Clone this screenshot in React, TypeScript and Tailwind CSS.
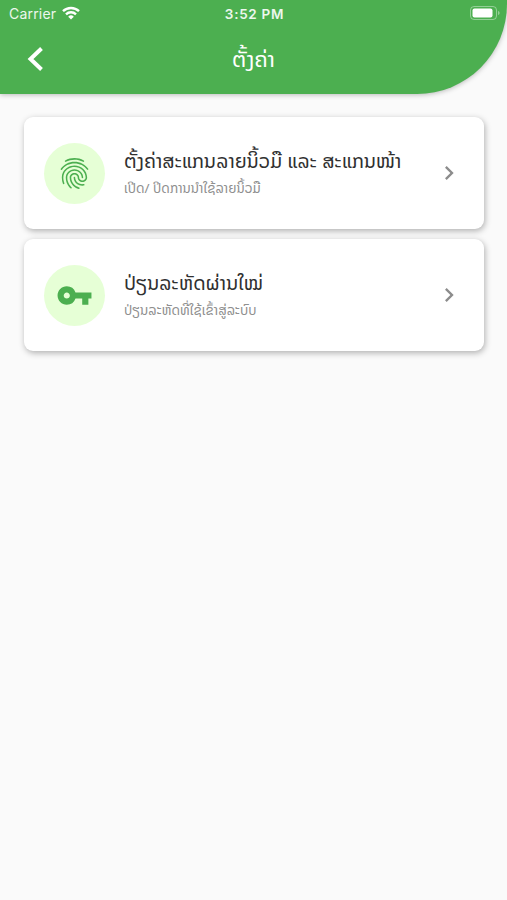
import type { ReactNode } from "react";
import { MdChevronRight, MdFingerprint, MdVpnKey } from "react-icons/md";

type SettingCardProps = {
  icon: ReactNode;
  title: string;
  description: string;
};

export default function App() {
  return (
    <div className="min-h-[900px] w-full overflow-hidden bg-[#fafafa] font-['Noto_Sans_Lao','Noto_Sans','DejaVu_Sans',sans-serif]">
      <Header />

      <main className="flex flex-col gap-[10px] pl-6 pr-[23px] pt-[23px]">
        <SettingCard
          icon={<MdFingerprint className="h-[37px] w-[37px]" />}
          title="ຕັ້ງຄ່າສະແກນລາຍນິ້ວມື ແລະ ສະແກນໜ້າ"
          description="ເປີດ/ ປິດການນຳໃຊ້ລາຍນິ້ວມື"
        />
        <SettingCard
          icon={<MdVpnKey className="h-[37px] w-[37px]" />}
          title="ປ່ຽນລະຫັດຜ່ານໃໝ່"
          description="ປ່ຽນລະຫັດທີ່ໃຊ້ເຂົ້າສູ່ລະບົບ"
        />
      </main>
    </div>
  );
}

function Header() {
  return (
    <header className="h-[94px] rounded-br-[90px] bg-[#4caf50] text-white shadow-[0_1px_5px_rgba(0,0,0,0.25)]">
      <div className="grid h-[27px] grid-cols-3 items-center pl-[9px] pr-[7px] font-['Inter','Liberation_Sans',sans-serif] text-[14px]">
        <div className="flex items-center gap-[6px]">
          <span className="tracking-[0.2px] text-white/90">Carrier</span>
          <WifiIcon />
        </div>
        <span className="whitespace-nowrap pt-px text-center text-[13.5px] font-semibold tracking-[0.7px] text-white/90">
          3:52 PM
        </span>
        <BatteryIcon />
      </div>

      <div className="grid h-[64px] grid-cols-[72px_1fr_72px] items-center">
        <button className="pb-px pl-[27px]" aria-label="ກັບຄືນ">
          <svg viewBox="0 0 17 26" className="h-[26px] w-[17px]" fill="none">
            <path d="M14.5 2.5 3.5 13l11 10.5" stroke="currentColor" strokeWidth="4" />
          </svg>
        </button>
        <h1 className="text-center text-[22px] leading-7">ຕັ້ງຄ່າ</h1>
      </div>
    </header>
  );
}

function SettingCard({ icon, title, description }: SettingCardProps) {
  return (
    <article className="flex h-[112px] items-center rounded-[9px] bg-white pl-[19.5px] pr-[21px] shadow-[1px_2px_6px_rgba(0,0,0,0.3)]">
      <div className="flex h-[61px] w-[61px] shrink-0 items-center justify-center rounded-full bg-[#e6ffd6] text-[#4caf50]">
        {icon}
      </div>

      <div className="ml-[19.5px] min-w-0 flex-1 pt-[2px]">
        <h2 className="whitespace-nowrap text-[19.6px] leading-7 text-[#303030]">
          {title}
        </h2>
        <p className="whitespace-nowrap text-[13.45px] leading-[26px] text-[#8f8f8f]">
          {description}
        </p>
      </div>

      <MdChevronRight className="h-7 w-7 shrink-0 text-[#8c8c8c]" />
    </article>
  );
}

function WifiIcon() {
  return (
    <svg viewBox="0 0 18 14" className="mb-px h-[14px] w-[18px]" fill="none" stroke="currentColor" strokeWidth="2.4">
      <path d="M1 5.2a11.5 11.5 0 0 1 16 0M4 8.3a7.2 7.2 0 0 1 10 0" />
      <path d="M9 13.5 6.2 10.7a4 4 0 0 1 5.6 0Z" fill="currentColor" stroke="none" />
    </svg>
  );
}

function BatteryIcon() {
  return (
    <svg viewBox="0 0 30 14" className="mb-px h-[14px] w-[30px] justify-self-end" fill="none">
      <rect x="0.5" y="0.5" width="26" height="13" rx="3.5" stroke="currentColor" strokeOpacity="0.4" />
      <rect x="2.5" y="2.5" width="20" height="9" rx="2" fill="currentColor" />
      <path d="M28 5v4c1-.4 1.6-1.1 1.6-2S29 5.4 28 5Z" fill="currentColor" fillOpacity="0.4" />
    </svg>
  );
}
